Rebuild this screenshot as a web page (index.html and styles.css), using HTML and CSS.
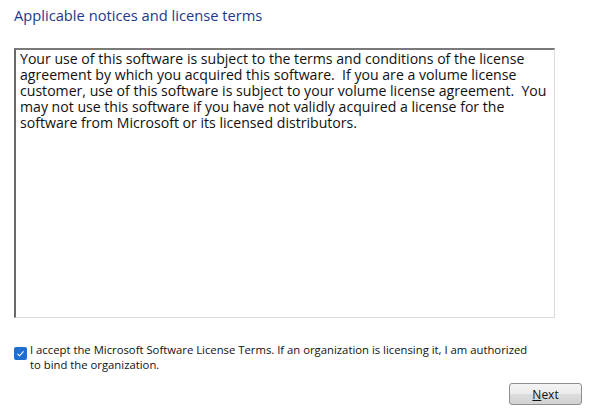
FILE: index.html
```html
<!DOCTYPE html>
<html>
<head>
<meta charset="utf-8">
<link rel="stylesheet" href="styles.css">
</head>
<body>
<div class="page">
  <h1 class="title">Applicable notices and license terms</h1>
  <div class="terms">Your use of this software is subject to the terms and conditions of the license<br>agreement by which you acquired this software.&nbsp; If you are a volume license<br>customer, use of this software is subject to your volume license agreement.&nbsp; You<br>may not use this software if you have not validly acquired a license for the<br>software from Microsoft or its licensed distributors.</div>
  <label class="accept">
    <span class="check"><svg width="13" height="13" viewBox="0 0 13 13"><path d="M3.5 6.8 L5.5 8.8 L9.6 4.3" fill="none" stroke="#fff" stroke-width="1.1"/></svg></span>
    <span class="accept-text">I accept the Microsoft Software License Terms. If an organization is licensing it, I am authorized<br>to bind the organization.</span>
  </label>
  <div class="actions">
    <button class="btn"><u>N</u>ext</button>
  </div>
</div>
</body>
</html>
```
FILE: styles.css
```css
html, body {
  margin: 0;
  padding: 0;
  background: #fff;
}
.page {
  width: 590px;
  height: 410px;
  box-sizing: border-box;
  padding: 4px 8px 0 14px;
  display: flex;
  flex-direction: column;
  font-family: "Open Sans", sans-serif;
}
.title {
  margin: 0;
  font-weight: normal;
  font-size: 14.7px;
  line-height: 22px;
  color: #1d3a8a;
}
.terms {
  margin-top: 22px;
  width: 541px;
  height: 270px;
  box-sizing: border-box;
  border-top: 2px solid #7a7a7a;
  border-left: 2px solid #6a6a6a;
  border-right: 1px solid #dcdcdc;
  border-bottom: 1px solid #dcdcdc;
  padding: 1px 4px;
  font-size: 14.1px;
  line-height: 16px;
  color: #111;
  white-space: nowrap;
}
.accept {
  margin-top: 24px;
  display: flex;
  align-items: flex-start;
  gap: 3px;
  font-size: 11.3px;
  line-height: 15px;
  color: #111;
}
.check {
  margin-top: 5px;
  width: 13px;
  height: 13px;
  border-radius: 2px;
  background: #1f6fd0;
  flex: none;
  display: flex;
}
.actions {
  margin-top: 11px;
  display: flex;
  justify-content: flex-end;
}
.btn {
  width: 73px;
  height: 22px;
  border: 1px solid #8e8e8e;
  border-radius: 3px;
  background: linear-gradient(#f4f4f4 0%, #ececec 48%, #dcdcdc 52%, #d2d2d2 100%);
  font-family: "Open Sans", sans-serif;
  font-size: 12px;
  color: #111;
  padding: 0;
}
```
